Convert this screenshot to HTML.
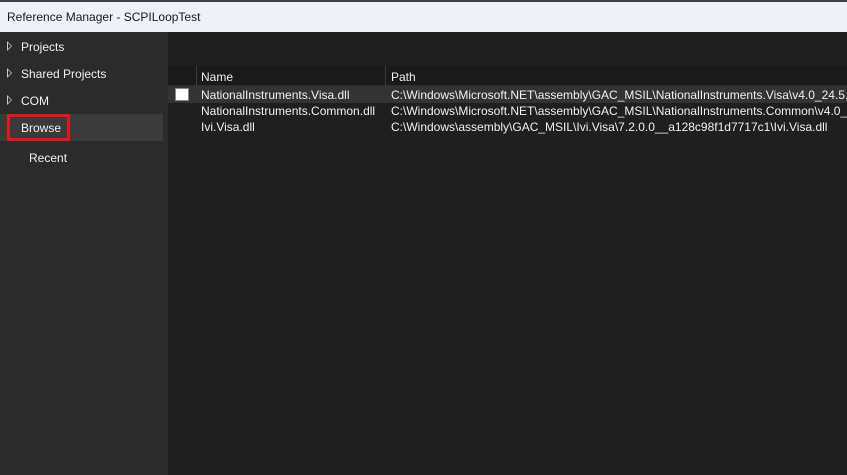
<!DOCTYPE html>
<html><head><style>
body{margin:0;width:847px;height:475px;overflow:hidden;background:#1f1f1f;font-family:"Liberation Sans",sans-serif;font-size:12px;color:#f0f0f0;position:relative}
div{position:absolute;box-sizing:border-box}
.t{white-space:nowrap}
.tri{width:0;height:0;border-left:5px solid #ccc;border-top:5px solid transparent;border-bottom:5px solid transparent}
.tri::after{content:"";position:absolute;left:-4px;top:-3px;border-left:3px solid #2b2b2b;border-top:3px solid transparent;border-bottom:3px solid transparent}
</style></head><body>
<div style="left:0;top:0;width:847px;height:2px;background:#3a3f4a"></div>
<div style="left:0;top:2px;width:847px;height:30px;background:#eef1f7"></div>
<div class="t" style="left:7px;top:10px;color:#1a1a1a">Reference Manager - SCPILoopTest</div>
<div style="left:0;top:32px;width:168px;height:443px;background:#2b2b2b"></div>
<div class="tri" style="left:7px;top:41px"></div>
<div class="t" style="left:21px;top:40px">Projects</div>
<div class="tri" style="left:7px;top:68px"></div>
<div class="t" style="left:21px;top:67px">Shared Projects</div>
<div class="tri" style="left:7px;top:95px"></div>
<div class="t" style="left:21px;top:94px">COM</div>
<div style="left:0;top:114px;width:163px;height:27px;background:#3a3a3a"></div>
<div style="left:7px;top:114px;width:63px;height:27px;border:3px solid #e8141c"></div>
<div class="t" style="left:21px;top:121px">Browse</div>
<div class="t" style="left:29px;top:151px">Recent</div>
<div style="left:168px;top:66px;width:679px;height:20px;background:#1a1a1a;border-bottom:1px solid #2d2d2d"></div>
<div style="left:196px;top:66px;width:1px;height:20px;background:#3a3a3a"></div>
<div style="left:385px;top:66px;width:1px;height:20px;background:#3a3a3a"></div>
<div class="t" style="left:201px;top:70px">Name</div>
<div class="t" style="left:391px;top:70px">Path</div>
<div style="left:168px;top:86px;width:679px;height:17px;background:#333333"></div>
<div style="left:175px;top:88px;width:14px;height:13px;background:#fff;border:1px solid #888"></div>
<div class="t" style="left:201px;top:88px">NationalInstruments.Visa.dll</div>
<div class="t" style="left:391px;top:88px">C:\Windows\Microsoft.NET\assembly\GAC_MSIL\NationalInstruments.Visa\v4.0_24.5.0</div>
<div class="t" style="left:201px;top:104px">NationalInstruments.Common.dll</div>
<div class="t" style="left:391px;top:104px">C:\Windows\Microsoft.NET\assembly\GAC_MSIL\NationalInstruments.Common\v4.0_</div>
<div class="t" style="left:201px;top:120px">Ivi.Visa.dll</div>
<div class="t" style="left:391px;top:120px">C:\Windows\assembly\GAC_MSIL\Ivi.Visa\7.2.0.0__a128c98f1d7717c1\Ivi.Visa.dll</div>
</body></html>
